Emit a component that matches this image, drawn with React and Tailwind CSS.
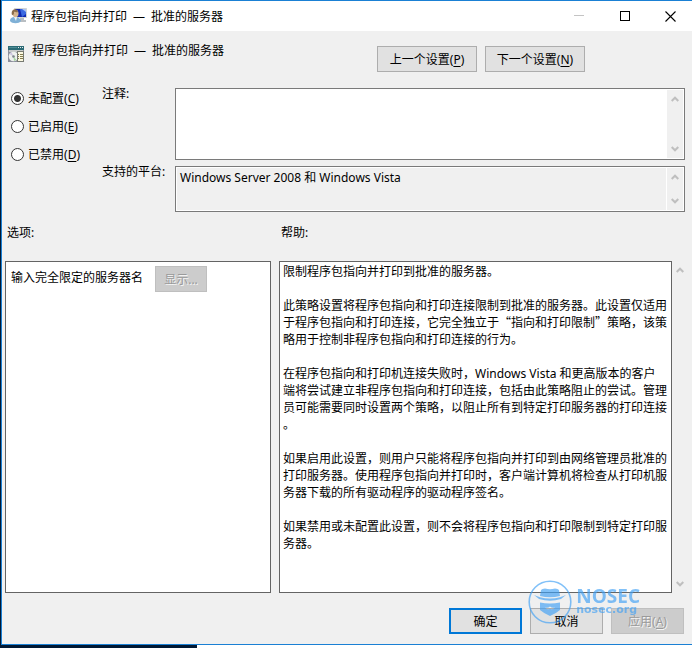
import React, { useState } from "react";

const states = [
  { id: "notConfigured", text: "未配置", hotkey: "C" },
  { id: "enabled", text: "已启用", hotkey: "E" },
  { id: "disabled", text: "已禁用", hotkey: "D" },
];

const Hotkey = ({ letter }) => (
  <>
    (<span className="underline underline-offset-2">{letter}</span>)
  </>
);

// Punctuation that has to take a full character cell
const Wide = ({ children }) => (
  <span lang="zh-CN" className="font-['Noto_Sans_CJK_SC',sans-serif] leading-none">
    {children}
  </span>
);

const PolicyName = () => (
  <>
    程序包指向并打印<span className="mx-1.5">—</span>批准的服务器
  </>
);

const UserMonitorIcon = () => (
  <svg width="17" height="16" viewBox="0 0 17 16" aria-hidden="true">
    <rect x="4" y="0" width="13" height="10" rx="0.500" fill="#d2d4d3" />
    <rect x="5" y="1" width="11" height="8" fill="#1029ae" />
    <path d="M10 1h6v5l-4 3z" fill="#3c69e0" />
    <path d="M12 1h4v3z" fill="#a9c4f6" />
    <path d="M10 10h4v2h2v2H9v-2h1z" fill="#b9bec2" />
    <path d="M0 13c0-3 2-4 5-4s6 2 6 4c-2 3-9 3-11 0z" fill="#7fb0d6" />
    <path d="M4 9l2 4 1-4z" fill="#f2f7fa" />
    <ellipse cx="5.500" cy="5.500" rx="3" ry="3.800" fill="#d3b48d" />
    <path d="M2 7C0 1 7-1 8 4c-2 1-3-1-4 0 0 2 0 3-2 3z" fill="#8b6d4a" />
  </svg>
);

const PolicyIcon = () => (
  <svg width="16" height="16" viewBox="0 0 16 16" aria-hidden="true">
    <rect width="16" height="16" fill="#8c8f9c" />
    <rect x="0" y="0" width="16" height="4" fill="#2b6b76" />
    <path d="M1 1.500h8" stroke="#4d8c95" />
    <path d="M10 1.500h1M12 1.500h1M14 1.500h1" stroke="#e8e8e8" />
    <rect x="1" y="4" width="14" height="2" fill="#c7c9c9" />
    <circle cx="5.500" cy="10.500" r="4.800" fill="#eef0ee" />
    <path d="M5.500 10.500L1.500 8l2-2z" fill="#cfc6df" />
    <path d="M5.500 10.500l3 3.500-2.500 1z" fill="#a7d6a1" />
    <circle cx="5.500" cy="10.500" r="1.300" fill="#7c8588" />
    <rect x="9.500" y="5.500" width="6" height="10" fill="#fbf8e0" stroke="#777a72" />
    <path d="M10 8.500h1M12 8.500h3M10 10.500h1M12 10.500h3M10 12.500h1M12 12.500h3" stroke="#857c50" />
  </svg>
);

const Chevron = ({ down }) => (
  <svg
    width="8"
    height="6"
    viewBox="0 0 8 6"
    fill="none"
    stroke="#bfbfbf"
    strokeWidth="2"
    className={down ? "rotate-180" : ""}
    aria-hidden="true"
  >
    <path d="M0.700 5L4 1.700 7.300 5" />
  </svg>
);

const ScrollBar = ({ className = "" }) => (
  <div
    className={`flex w-4 shrink-0 flex-col items-center justify-between bg-[#f0f0f0] ${className}`}
  >
    <Chevron />
    <Chevron down />
  </div>
);

const Watermark = () => (
  <div className="pointer-events-none absolute right-13 bottom-5 flex items-center gap-1 text-[#3fa0f5] opacity-65">
    <svg width="44" height="44" viewBox="0 0 44 44" aria-hidden="true">
      <circle cx="22" cy="22" r="20.800" fill="none" stroke="currentColor" strokeWidth="1.600" />
      <path d="M12 16l1-6q1-1.500 4-1.500 5 1.500 10 0 3 0 4 1.500l1 6q-10 2.500-20 0z" fill="currentColor" />
      <path d="M6 15l6 2.200q10 2.500 20 0l6-2.200-5 4q-11 3.500-22 0z" fill="currentColor" />
      <path
        d="M12 22.500q10 2 20 0V30q-4 3.500-10 6-6-2.500-10-6z M17 27.500q3 1 5-1 2 2 5 1-2 2.500-5 1.200-3 1.300-5-1.200z"
        fill="currentColor"
        fillRule="evenodd"
      />
    </svg>
    <div className="flex flex-col">
      <span className="font-['Open_Sans',sans-serif] text-[19px] leading-4 font-bold">NOSEC</span>
      <span className="font-['DejaVu_Sans',sans-serif] text-[11px] leading-3 font-bold">
        nosec.org
      </span>
    </div>
  </div>
);

const buttonBase = "h-[26px] border border-[#adadad] bg-[#e1e1e1] text-center";
const buttonDisabled =
  "h-[26px] border border-[#bfbfbf] bg-[#cccccc] text-center text-[#9a9a9a] [text-shadow:1px_1px_0_#f4f4f4]";

const App = () => {
  const [selected, setSelected] = useState("notConfigured");
  const [comment, setComment] = useState("");

  return (
    <div className="flex min-h-screen flex-col bg-[#001833] pl-px font-['Noto_Sans','Noto_Sans_CJK_SC',sans-serif] text-[12px] leading-[17px] text-black">
      <div className="relative flex grow flex-col border-t border-b border-l border-[#1a80d4] bg-[#f0f0f0]">
        {/* Title bar */}
        <header className="flex h-[30px] items-center bg-white pl-2">
          <UserMonitorIcon />
          <h1 className="grow pl-1">
            <PolicyName />
          </h1>
          <button aria-label="最小化" disabled className="flex w-[46px] justify-center">
            <svg width="10" height="10" stroke="#c4c4c4">
              <path d="M0 4.500h10" />
            </svg>
          </button>
          <button aria-label="最大化" className="flex w-[46px] justify-center">
            <svg width="11" height="11" fill="none" stroke="#000">
              <rect x="0.500" y="0.500" width="9" height="9" />
            </svg>
          </button>
          <button aria-label="关闭" className="flex w-[44px] justify-center">
            <svg width="11" height="11" stroke="#000" strokeWidth="1.100">
              <path d="M0.500 0.500l10 10M10.500 0.500l-10 10" />
            </svg>
          </button>
        </header>

        {/* Policy name and navigation */}
        <section className="flex pt-[15px] pr-[107px] pl-1.5">
          <div className="flex grow items-start gap-2">
            <PolicyIcon />
            <h2 className="-mt-1">
              <PolicyName />
            </h2>
          </div>
          <div className="flex gap-2">
            <button className={`${buttonBase} w-[100px]`}>
              上一个设置
              <Hotkey letter="P" />
            </button>
            <button className={`${buttonBase} w-[100px]`}>
              下一个设置
              <Hotkey letter="N" />
            </button>
          </div>
        </section>

        {/* State, comment and supported platforms */}
        <section className="flex pt-4 pr-[7px] pl-2">
          <div className="flex w-[92px] shrink-0 flex-col gap-[11px] pt-0.5">
            {states.map((item) => (
              <label key={item.id} className="flex items-center gap-1">
                <input
                  type="radio"
                  name="state"
                  checked={selected === item.id}
                  onChange={() => setSelected(item.id)}
                  className="ml-px size-[13px] appearance-none rounded-full border border-[#333] bg-white checked:bg-[radial-gradient(circle,#333_0,#333_3px,white_4px)]"
                />
                <span>
                  {item.text}
                  <Hotkey letter={item.hotkey} />
                </span>
              </label>
            ))}
          </div>
          <div className="flex grow flex-col gap-1.5">
            <div className="flex">
              <label htmlFor="comment" className="-mt-[3px] w-[73px] shrink-0">
                注释:
              </label>
              <div className="flex h-[72px] grow border border-[#7a7a7a] bg-white p-px">
                <textarea
                  id="comment"
                  value={comment}
                  onChange={(e) => setComment(e.target.value)}
                  className="grow resize-none overflow-hidden px-1 outline-none"
                />
                <ScrollBar className="py-1.5" />
              </div>
            </div>
            <div className="flex">
              <label htmlFor="platforms" className="-mt-[3px] w-[73px] shrink-0">
                支持的平台:
              </label>
              <div className="flex h-[46px] grow gap-px border border-[#7a7a7a] bg-white p-px">
                <textarea
                  id="platforms"
                  readOnly
                  value="Windows Server 2008 和 Windows Vista"
                  className="grow resize-none overflow-hidden bg-[#f0f0f0] px-[3px] pt-px outline-none"
                />
                <ScrollBar className="py-1.5" />
              </div>
            </div>
          </div>
        </section>

        {/* Options and help */}
        <section className="flex grow gap-2 pt-3 pl-[3px]">
          <div className="flex w-[266px] shrink-0 flex-col">
            <h3 className="pb-5 pl-0.5">选项:</h3>
            <div className="flex grow items-start gap-3 border border-[#646464] bg-white px-[5px] py-1">
              <span className="pt-[3px]">输入完全限定的服务器名</span>
              <button disabled className={`${buttonDisabled} w-[52px]`}>
                显示...
              </button>
            </div>
          </div>
          <div className="flex grow flex-col">
            <h3 className="pb-5 pl-0.5">帮助:</h3>
            <div className="flex grow">
              <div className="flex grow flex-col gap-[17px] border border-[#646464] bg-white pt-px pl-[3px]">
                <p>限制程序包指向并打印到批准的服务器。</p>
                <p>
                  此策略设置将程序包指向和打印连接限制到批准的服务器。此设置仅适用
                  <br />
                  于程序包指向和打印连接，它完全独立于<Wide>“</Wide>指向和打印限制
                  <Wide>”</Wide>策略，该策
                  <br />
                  略用于控制非程序包指向和打印连接的行为。
                </p>
                <p>
                  在程序包指向和打印机连接失败时，Windows Vista 和更高版本的客户
                  <br />
                  端将尝试建立非程序包指向和打印连接，包括由此策略阻止的尝试。管理
                  <br />
                  员可能需要同时设置两个策略，以阻止所有到特定打印服务器的打印连接
                  <br />。
                </p>
                <p>
                  如果启用此设置，则用户只能将程序包指向并打印到由网络管理员批准的
                  <br />
                  打印服务器。使用程序包指向并打印时，客户端计算机将检查从打印机服
                  <br />
                  务器下载的所有驱动程序的驱动程序签名。
                </p>
                <p>
                  如果禁用或未配置此设置，则不会将程序包指向和打印限制到特定打印服
                  <br />
                  务器。
                </p>
              </div>
              <ScrollBar className="mr-1 py-1.5" />
            </div>
          </div>
        </section>

        <footer className="flex justify-end gap-2 pt-[15px] pr-2 pb-2.5">
          <button className="h-[26px] w-[73px] border-2 border-[#0078d7] bg-[#e1e1e1] text-center">
            确定
          </button>
          <button className={`${buttonBase} w-[73px]`}>取消</button>
          <button disabled className={`${buttonDisabled} w-[73px]`}>
            应用
            <Hotkey letter="A" />
          </button>
        </footer>

        <Watermark />
      </div>

      {/* Desktop strip under the window */}
      <div className="flex h-[3px]">
        <div className="w-[196px]" />
        <div className="grow bg-white" />
      </div>
    </div>
  );
};

export default App;
